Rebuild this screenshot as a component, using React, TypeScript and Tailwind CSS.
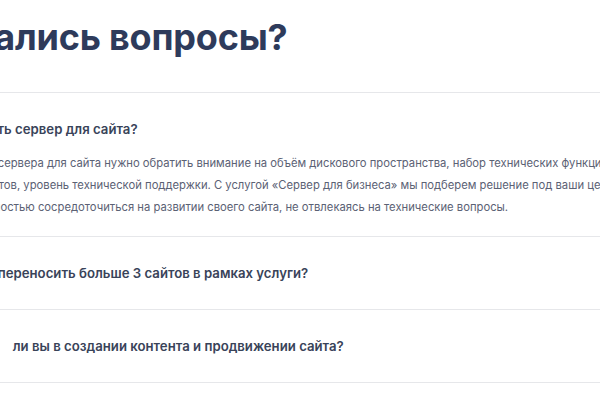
import React from 'react';

const faq = [
  {
    q: 'Как выбрать сервер для сайта?',
    a: [
      'При выборе сервера для сайта нужно обратить внимание на объём дискового пространства, набор технических функций, количество',
      'ваших проектов, уровень технической поддержки. С услугой «Сервер для бизнеса» мы подберем решение под ваши цели и задачи,',
      'чтоб вы полностью сосредоточиться на развитии своего сайта, не отвлекаясь на технические вопросы.',
    ],
  },
  { q: 'Можно ли переносить больше 3 сайтов в рамках услуги?' },
  { q: 'Помогаете\u2003ли вы в создании контента и продвижении сайта?' },
  { q: 'Сколько стоит обслуживание сервера?' },
];

export default function App() {
  return (
    <div className="w-[600px] h-[400px] overflow-hidden bg-white font-['Inter','Noto_Sans',sans-serif]">
      <div className="-ml-[72px] w-[1000px]">
        <h2 className="pt-[15px] mb-[33px] text-[36px] leading-[44px] font-bold tracking-[-0.2px] text-[#2e3b5b] whitespace-nowrap">
          Остались вопросы?
        </h2>
        {faq.map((item, i) => (
          <div key={i} className="border-t border-[#e6e7ea]">
            <div className={i === 0 ? 'pt-[26px] pb-[18px]' : 'py-[26px]'}>
              <h3 className="text-[13.2px] leading-[20px] font-semibold text-[#394359] whitespace-nowrap">
                {item.q}
              </h3>
              {item.a && (
                <div className="mt-[13px] text-[11.25px] leading-[22px] text-[#5b6174] whitespace-nowrap">
                  {item.a.map((line, j) => (
                    <p key={j}>{line}</p>
                  ))}
                </div>
              )}
            </div>
          </div>
        ))}
      </div>
    </div>
  );
}
